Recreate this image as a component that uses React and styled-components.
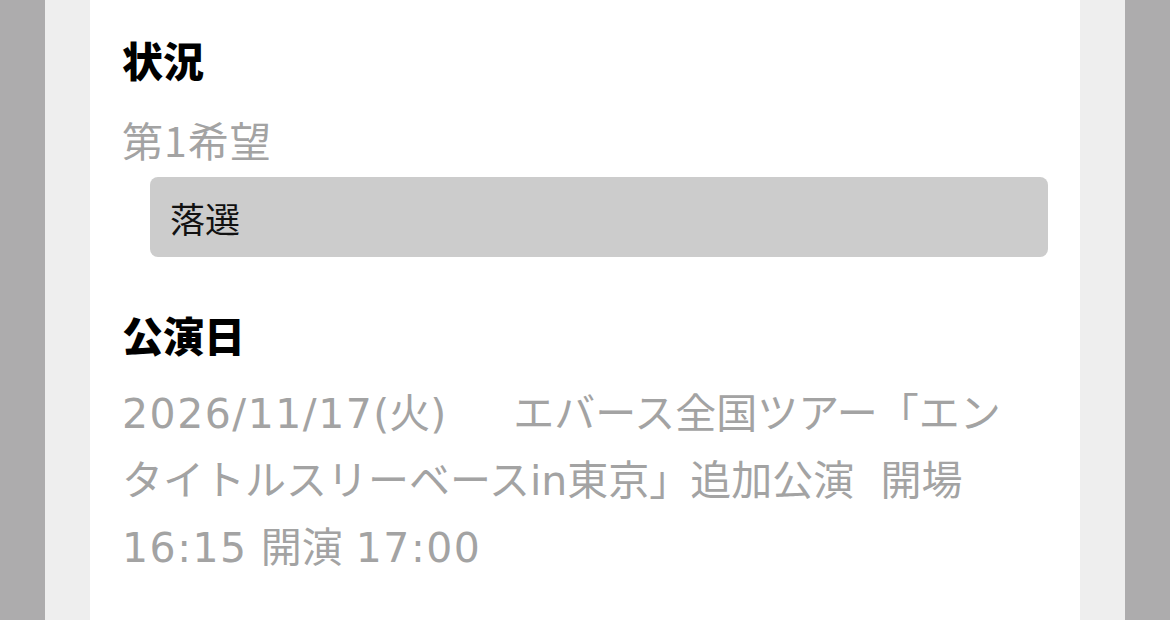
import React from "react";
import styled, { createGlobalStyle } from "styled-components";

const GlobalStyle = createGlobalStyle`
  html, body {
    margin: 0;
    padding: 0;
    background: #adacad;
    font-family: "DejaVu Sans", "Noto Sans CJK JP", sans-serif;
  }
  #root {
    height: 620px;
    overflow: hidden;
  }
`;

const Frame = styled.div`
  margin: 0 45px;
  padding: 0 45px;
  height: 620px;
  background: #eeeeee;
`;

const Card = styled.main`
  height: 100%;
  box-sizing: border-box;
  background: #ffffff;
  padding: 39px 32px 0 32px;
  display: flex;
  flex-direction: column;
`;

const Heading = styled.h2`
  margin: ${(p) => p.$gap || 0}px 0 0 0;
  font-family: "Noto Sans CJK JP", sans-serif;
  font-size: 41px;
  line-height: 41px;
  font-weight: 900;
  color: #000;
`;

const Label = styled.div`
  margin-top: 39px;
  font-family: "Noto Sans CJK JP", sans-serif;
  font-size: 41px;
  line-height: 41px;
  letter-spacing: 1px;
  color: #a3a3a3;
`;

const StatusBox = styled.div`
  margin: 17px 0 0 28px;
  height: 80px;
  box-sizing: border-box;
  padding-left: 20px;
  display: flex;
  align-items: center;
  background: #cccccc;
  border-radius: 8px;
  font-family: "Noto Sans CJK JP", sans-serif;
  font-size: 35px;
  color: #111;
`;

const DateText = styled.p`
  margin: 26px 0 0 0;
  max-width: 895px;
  font-size: 41px;
  line-height: 67px;
  color: #a3a3a3;
  white-space: pre-wrap;
  line-break: strict;
`;

const Latin = styled.span`
  letter-spacing: 1.5px;
`;

export default function App() {
  return (
    <>
      <GlobalStyle />
      <Frame>
        <Card>
          <Heading>状況</Heading>
          <Label>第1希望</Label>
          <StatusBox>落選</StatusBox>
          <Heading $gap={57}>公演日</Heading>
          <DateText>
            <Latin>2026/11/17</Latin>
            {"(火)\u3000  エバース全国ツアー「エンタイトルスリーベースin東京」追加公演  開場 "}
            <Latin>16:15</Latin>
            {" 開演 "}
            <Latin>17:00</Latin>
          </DateText>
        </Card>
      </Frame>
    </>
  );
}
